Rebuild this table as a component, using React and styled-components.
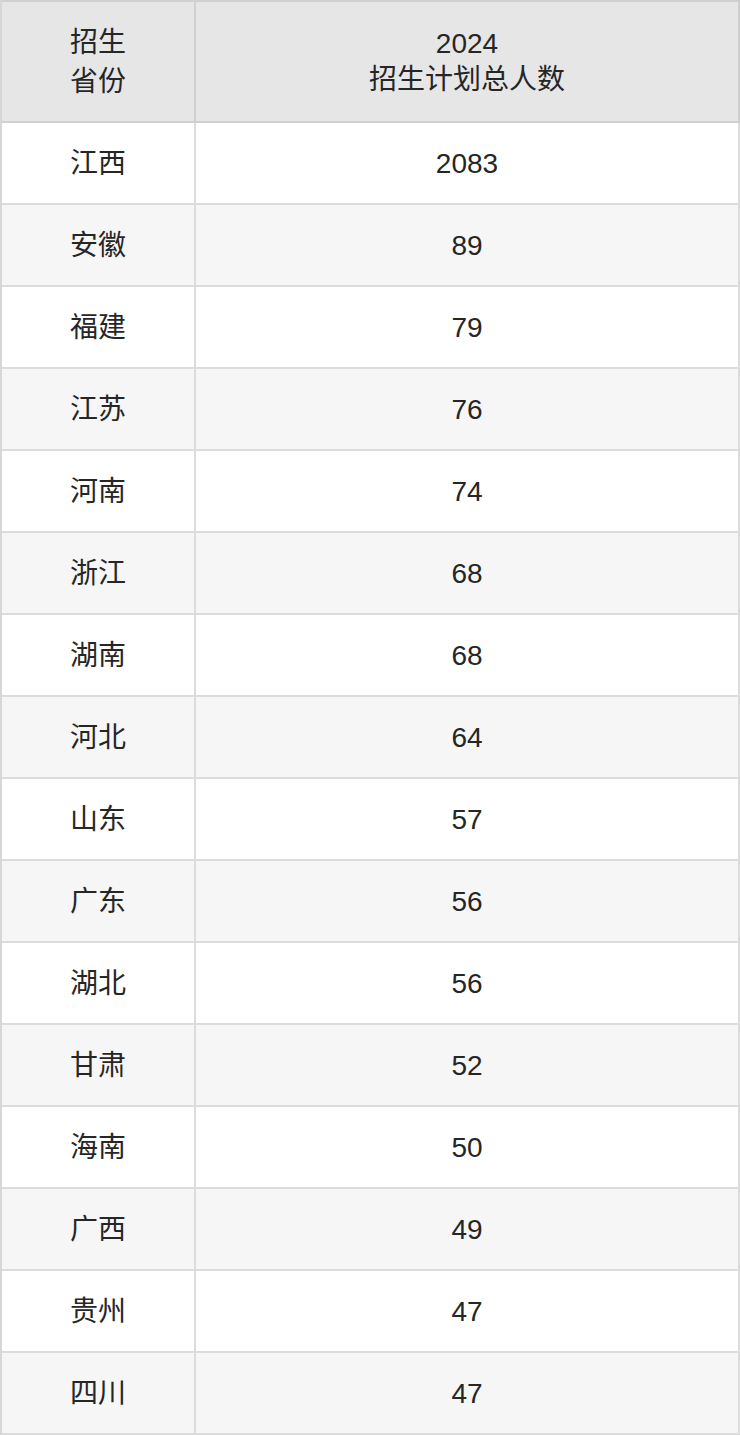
import React from "react";
import styled, { createGlobalStyle } from "styled-components";

const Global = createGlobalStyle`
  html, body { margin: 0; padding: 0; background: #ffffff; }
  body { font-family: "Liberation Sans", "Noto Sans CJK SC", sans-serif; }
`;

const Table = styled.div`
  display: grid;
  grid-template-columns: 194px 544px;
  width: 738px;
  border-top: 2px solid #d0d0d0;
  border-left: 2px solid #d7d7d7;
  color: #262626;
  font-size: 28px;
  line-height: 39px;
`;

const HeadCell = styled.div`
  background: #e6e6e6;
  height: 119px;
  border-right: 2px solid #d0d0d0;
  border-bottom: 2px solid #d0d0d0;
  display: flex;
  flex-direction: column;
  align-items: center;
  justify-content: center;
  text-align: center;
`;

const HeadLine = styled.span`
  display: block;
  line-height: ${(p) => p.$lh || "39px"};
`;

const Cell = styled.div`
  background: ${(p) => (p.$alt ? "#f6f6f6" : "#ffffff")};
  height: 80px;
  border-right: 2px solid #dcdcdc;
  border-bottom: 2px solid #dcdcdc;
  display: flex;
  align-items: center;
  justify-content: center;
`;

const rows = [
  ["江西", "2083"],
  ["安徽", "89"],
  ["福建", "79"],
  ["江苏", "76"],
  ["河南", "74"],
  ["浙江", "68"],
  ["湖南", "68"],
  ["河北", "64"],
  ["山东", "57"],
  ["广东", "56"],
  ["湖北", "56"],
  ["甘肃", "52"],
  ["海南", "50"],
  ["广西", "49"],
  ["贵州", "47"],
  ["四川", "47"],
];

export default function App() {
  return (
    <>
      <Global />
      <Table>
        <HeadCell>
          <HeadLine>招生</HeadLine>
          <HeadLine>省份</HeadLine>
        </HeadCell>
        <HeadCell>
          <HeadLine $lh="36px">2024</HeadLine>
          <HeadLine $lh="36px">招生计划总人数</HeadLine>
        </HeadCell>
        {rows.map(([p, n], i) => (
          <React.Fragment key={p + i}>
            <Cell $alt={i % 2 === 1}>{p}</Cell>
            <Cell $alt={i % 2 === 1}>{n}</Cell>
          </React.Fragment>
        ))}
      </Table>
    </>
  );
}
